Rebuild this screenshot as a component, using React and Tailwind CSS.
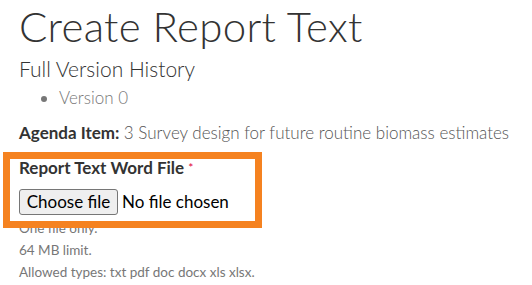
import React from 'react';

const App = () => {
    return (
        <div className="relative w-[532px] h-[285px] bg-white overflow-hidden text-[#333] pl-[19px]" style={{ fontFamily: 'Lato, "Open Sans", sans-serif' }}>
            <h1 className="text-[42px] leading-[50px] font-light pt-[1px] tracking-[0.3px]">Create Report Text</h1>
            <h2 className="text-[21px] leading-[26px] font-light mt-[5px]">Full Version History</h2>
            <ul className="list-disc pl-[40px] mt-[4px] text-[17px] leading-[24px] text-[#777] font-light">
                <li>Version 0</li>
            </ul>
            <div className="text-[17px] leading-[24px] mt-[11px]">
                <span className="font-bold">Agenda Item:</span>{' '}
                <span className="font-light text-[#555]">3 Survey design for future routine biomass estimates</span>
            </div>

            <div className="mt-[11px]">
                <div className="text-[17px] leading-[24px] font-bold">
                    Report Text Word File <span className="text-[#e0003a] font-normal text-[12px] align-top">*</span>
                </div>
                <div className="flex items-center mt-[9px]">
                    <span className="h-[26px] w-[99px] flex items-center justify-center bg-[#efefef] border border-[#767676] rounded-[3px] text-[17px] text-black">Choose file</span>
                    <span className="ml-[4px] text-[17px] text-black">No file chosen</span>
                </div>
                <div className="text-[13.5px] leading-[22px] text-[#777] mt-[2px]">
                    <div>One file only.</div>
                    <div>64 MB limit.</div>
                    <div>Allowed types: txt pdf doc docx xls xlsx.</div>
                </div>
            </div>

            {/* annotation outline */}
            <div className="absolute left-[3px] top-[152px] w-[259px] h-[76px] border-[7px] border-[#f58220]"></div>
        </div>
    );
};

export default App;
